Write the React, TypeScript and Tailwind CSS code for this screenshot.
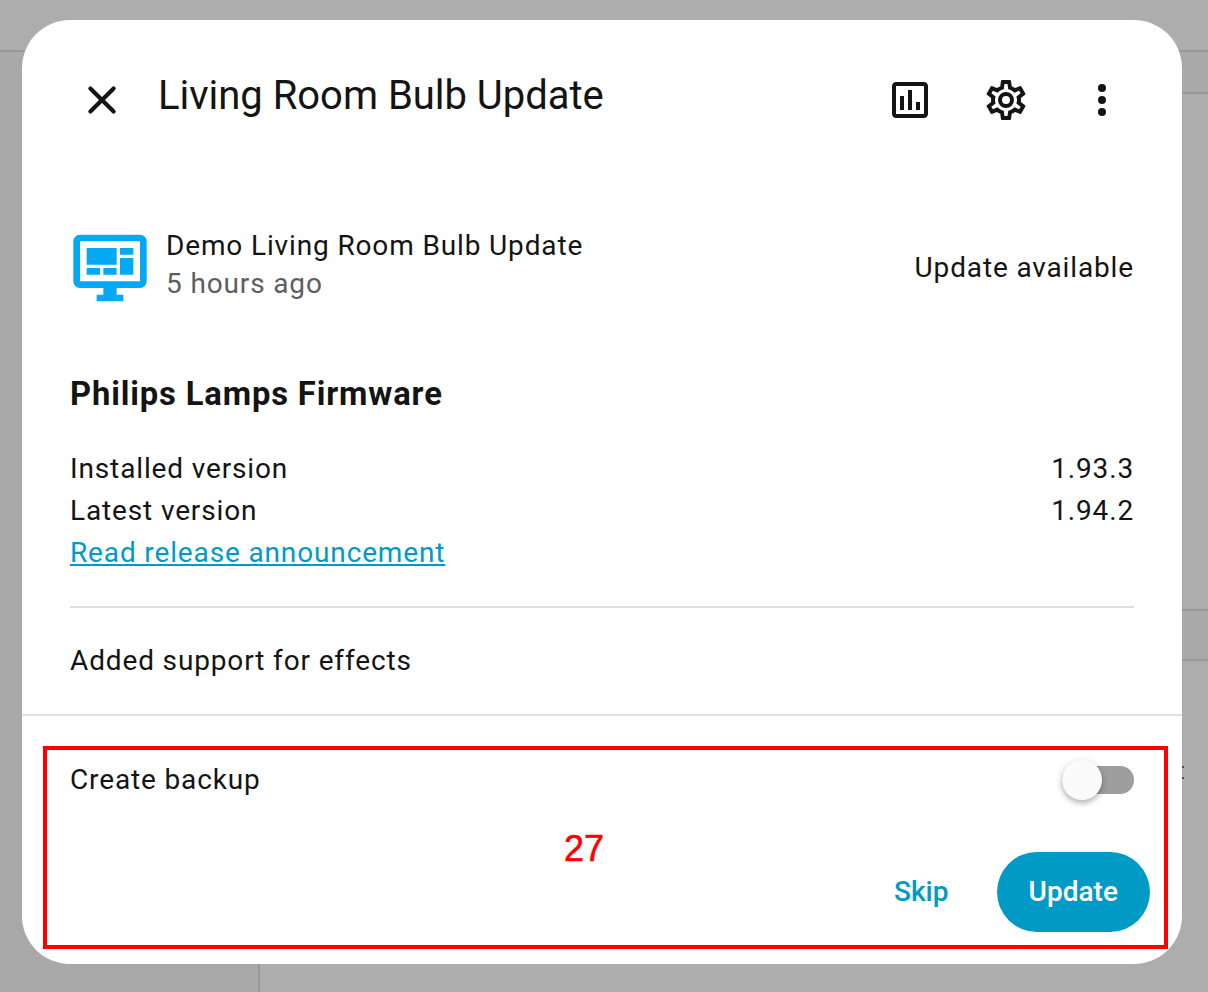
import React from "react";

const icons = {
  chart:
    "M9 17H7V10H9V17M13 17H11V7H13V17M17 17H15V13H17V17M19 19H5V5H19V19.1M19 3H5C3.9 3 3 3.9 3 5V19C3 20.1 3.9 21 5 21H19C20.1 21 21 20.1 21 19V5C21 3.9 20.1 3 19 3Z",
  cog: "M12,8A4,4 0 0,1 16,12A4,4 0 0,1 12,16A4,4 0 0,1 8,12A4,4 0 0,1 12,8M12,10A2,2 0 0,0 10,12A2,2 0 0,0 12,14A2,2 0 0,0 14,12A2,2 0 0,0 12,10M10,22C9.75,22 9.54,21.82 9.5,21.58L9.13,18.93C8.5,18.68 7.96,18.34 7.44,17.94L4.95,18.95C4.73,19.03 4.46,18.95 4.34,18.73L2.34,15.27C2.21,15.05 2.27,14.78 2.46,14.63L4.57,12.97L4.5,12L4.57,11L2.46,9.37C2.27,9.22 2.21,8.95 2.34,8.73L4.34,5.27C4.46,5.05 4.73,4.96 4.95,5.05L7.44,6.05C7.96,5.66 8.5,5.32 9.13,5.07L9.5,2.42C9.54,2.18 9.75,2 10,2H14C14.25,2 14.46,2.18 14.5,2.42L14.87,5.07C15.5,5.32 16.04,5.66 16.56,6.05L19.05,5.05C19.27,4.96 19.54,5.05 19.66,5.27L21.66,8.73C21.79,8.95 21.73,9.22 21.54,9.37L19.43,11L19.5,12L19.43,13L21.54,14.63C21.73,14.78 21.79,15.05 21.66,15.27L19.66,18.73C19.54,18.95 19.27,19.04 19.05,18.95L16.56,17.95C16.04,18.34 15.5,18.68 14.87,18.93L14.5,21.58C14.46,21.82 14.25,22 14,22H10M11.25,4L10.88,6.61C9.68,6.86 8.62,7.5 7.85,8.39L5.44,7.35L4.69,8.65L6.8,10.2C6.4,11.37 6.4,12.64 6.8,13.8L4.68,15.36L5.43,16.66L7.86,15.62C8.63,16.5 9.68,17.14 10.87,17.38L11.24,20H12.76L13.13,17.39C14.32,17.14 15.37,16.5 16.14,15.62L18.57,16.66L19.32,15.36L17.2,13.81C17.6,12.64 17.6,11.37 17.2,10.2L19.31,8.65L18.56,7.35L16.15,8.39C15.38,7.5 14.32,6.86 13.12,6.62L12.75,4H11.25Z",
  dots: "M12,16A2,2 0 0,1 14,18A2,2 0 0,1 12,20A2,2 0 0,1 10,18A2,2 0 0,1 12,16M12,10A2,2 0 0,1 14,12A2,2 0 0,1 12,14A2,2 0 0,1 10,12A2,2 0 0,1 12,10M12,4A2,2 0 0,1 14,6A2,2 0 0,1 12,8A2,2 0 0,1 10,6A2,2 0 0,1 12,4Z",
  dashboard:
    "M21,16V4H3V16H21M21,2A2,2 0 0,1 23,4V16A2,2 0 0,1 21,18H14V20H16V22H8V20H10V18H3C1.89,18 1,17.1 1,16V4C1,2.89 1.89,2 3,2H21M5,6H14V11H5V6M15,6H19V8H15V6M19,9V14H15V9H19M5,12H9V14H5V12M10,12H14V14H10V12Z",
};

function Icon({ path, className }: { path: string; className: string }) {
  return (
    <svg viewBox="0 0 24 24" fill="currentColor" className={className} aria-hidden="true">
      <path d={path} />
    </svg>
  );
}

function CloseIcon() {
  return (
    <svg viewBox="0 0 24 24" fill="none" stroke="currentColor" className="size-12" aria-hidden="true">
      <path d="M6.2 6.2L17.8 17.8M17.8 6.2L6.2 17.8" strokeWidth="2.1" strokeLinecap="round" />
    </svg>
  );
}

function IconButton({ label, children }: { label: string; children: React.ReactNode }) {
  return (
    <button aria-label={label} className="flex size-24 items-center justify-center">
      {children}
    </button>
  );
}

function PageBehind() {
  return (
    <div className="flex h-full flex-col bg-[#adadad]">
      <div className="h-[52px] shrink-0 border-b-2 border-[#989898]" />
      <div className="flex flex-1">
        <div className="w-[260px] border-r-2 border-[#989898] bg-[#a9a9a9]" />
        <div className="flex flex-1 flex-col">
          <div className="h-[42px] border-b-2 border-[#989898] bg-[#a9a9a9]" />
          <div className="h-[517px] border-b-2 border-[#989898]" />
          <div className="h-[50px] border-b-2 border-[#989898] bg-[#a9a9a9]" />
          <div className="flex flex-col items-end gap-[9px] pt-[105px] pr-6">
            <div className="h-[2px] w-3 bg-[#505050]" />
            <div className="h-[2px] w-3 bg-[#505050]" />
          </div>
        </div>
      </div>
    </div>
  );
}

function VersionRow({ label, value }: { label: string; value: string }) {
  return (
    <div className="flex justify-between">
      <span>{label}</span>
      <span>{value}</span>
    </div>
  );
}

export default function App() {
  return (
    <div className="relative h-[992px] w-[1208px] overflow-hidden font-['Roboto',sans-serif] text-[#141414]">
      <PageBehind />
      <div className="absolute inset-0 pt-5 pl-[22px]">
        <section
          role="dialog"
          className="relative flex h-[944px] w-[1160px] flex-col rounded-[48px] bg-white text-[28px] leading-[42px] tracking-[0.86px]"
        >
          <header className="flex h-40 items-center pr-8 pl-8">
            <IconButton label="Close">
              <CloseIcon />
            </IconButton>
            <h1 className="flex-1 pb-[9px] pl-2 text-[40px] leading-[48px] tracking-[-0.02px]">
              Living Room Bulb Update
            </h1>
            <IconButton label="History">
              <Icon path={icons.chart} className="size-12" />
            </IconButton>
            <IconButton label="Settings">
              <Icon path={icons.cog} className="size-12" />
            </IconButton>
            <IconButton label="More">
              <Icon path={icons.dots} className="size-12" />
            </IconButton>
          </header>

          <main className="flex h-[536px] flex-col border-b-2 border-[#e0e0e0] px-12 pt-12">
            <div className="flex h-20 items-center">
              <Icon path={icons.dashboard} className="size-20 text-[#03a9f4]" />
              <div className="flex-1 pb-1.5 pl-4 leading-[38px]">
                <div>Demo Living Room Bulb Update</div>
                <div className="text-[#5e5e5e]">5 hours ago</div>
              </div>
              <div>Update available</div>
            </div>
            <h2 className="mt-[65px] text-[32.76px] font-bold">Philips Lamps Firmware</h2>
            <div className="mt-[33px]">
              <VersionRow label="Installed version" value="1.93.3" />
              <VersionRow label="Latest version" value="1.94.2" />
              <a className="text-[#009ac7] underline">Read release announcement</a>
            </div>
            <hr className="mt-8 border-t-2 border-[#e0e0e0]" />
            <p className="mt-8">Added support for effects</p>
          </main>

          <footer className="flex flex-1 flex-col pt-[43px]">
            <div className="flex items-center justify-between px-12">
              <span>Create backup</span>
              <button
                role="switch"
                aria-checked="false"
                aria-label="Create backup"
                className="flex h-7 w-[72px] items-center rounded-full bg-[#9e9e9e]"
              >
                <span className="size-10 rounded-full bg-[#fafafa] shadow-[0_3px_5px_rgba(0,0,0,0.22),0_2px_10px_rgba(0,0,0,0.12)]" />
              </button>
            </div>
            <div className="mt-[51px] flex justify-end gap-4 pr-8 font-medium tracking-[0.03px]">
              <button className="h-20 px-8 text-[#009ac7]">Skip</button>
              <button className="h-20 rounded-full bg-[#009ac7] px-8 text-white">Update</button>
            </div>
          </footer>
        </section>
      </div>
      <div className="pointer-events-none absolute top-[746px] left-[43px] flex h-[203px] w-[1125px] items-center justify-center border-4 border-[#ff0000] pt-[2px] pr-[43px] font-['Liberation_Sans',sans-serif] text-[36px] text-[#ff0000] [-webkit-text-stroke:0.6px_#ff0000]">
        27
      </div>
    </div>
  );
}
